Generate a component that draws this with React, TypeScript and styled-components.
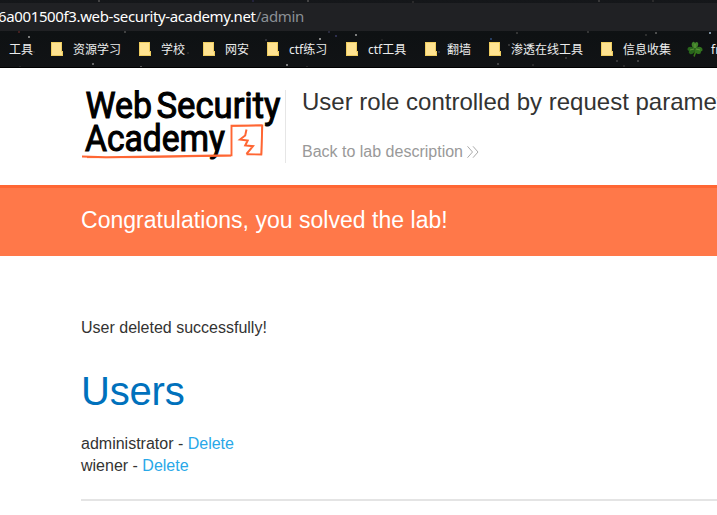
import React from "react";
import styled, { createGlobalStyle } from "styled-components";

const GlobalStyle = createGlobalStyle`
  *, *::before, *::after { box-sizing: border-box; }
  html, body { margin: 0; padding: 0; background: #fff; }
  body { overflow: hidden; font-family: "Liberation Sans", Arial, sans-serif; color: #333332; }
`;

const Page = styled.div`
  width: 717px;
  height: 515px;
  overflow: hidden;
`;

const Browser = styled.div`
  position: relative;
  height: 68px;
  padding-top: 3px;
  background: linear-gradient(#15171a 0, #0e1113 34px, #111315 66px);
  border-bottom: 1px solid #000;
`;

const Stars = styled.svg`
  position: absolute;
  inset: 0;
  width: 717px;
  height: 67px;
`;

const AddressBar = styled.div`
  height: 28px;
  background: #202124;
  color: #fff;
  font: 15px/27px "Noto Sans", sans-serif;
  white-space: nowrap;
`;

const Url = styled.span`
  display: inline-block;
  margin-left: -2px;
  letter-spacing: -0.37px;
`;

const UrlPath = styled.span`
  color: #8b9095;
`;

const Bookmarks = styled.nav`
  display: flex;
  align-items: center;
  gap: 18px;
  height: 36px;
  padding-left: 9px;
  color: #eceded;
  font: 12px/16px "Noto Sans", "Noto Sans CJK SC", sans-serif;
`;

const Bookmark = styled.div`
  display: flex;
  flex: none;
  align-items: center;
  gap: 10px;
  height: 18px;
`;

const BookmarkLabel = styled.span<{ $width: number }>`
  flex: none;
  width: ${(p) => p.$width}px;
  padding-top: 2px;
  white-space: nowrap;
`;

const CloverMark = styled(Bookmark)`
  gap: 8px;
  margin-left: -2px;
`;

const Header = styled.header`
  display: flex;
  height: 117px;
  padding: 22px 0 0 81px;
`;

const LogoBox = styled.div`
  flex: none;
  width: 205px;
  height: 73px;
  border-right: 1px solid #e6e6e6;
`;

const LabInfo = styled.div`
  flex: none;
  padding-left: 16px;
  white-space: nowrap;
`;

const Title = styled.h2`
  margin: 0;
  font-size: 24px;
  line-height: 24px;
  font-weight: 400;
`;

const BackLink = styled.a`
  display: flex;
  align-items: center;
  gap: 4px;
  margin-top: 28px;
  color: #999;
  font-size: 16px;
  line-height: 20px;
`;

const Banner = styled.section`
  height: 71px;
  padding: 17px 0 0 81px;
  border-top: 3px solid #ff6633;
  background: #ff7849;
  color: #fff;
`;

const BannerText = styled.h4`
  margin: 0;
  font-size: 23px;
  line-height: 30px;
  font-weight: 400;
  letter-spacing: 0.03px;
  white-space: nowrap;
`;

const Content = styled.main`
  padding: 61px 0 0 81px;
  font-size: 16px;
  line-height: 22px;
`;

const Message = styled.p`
  margin: 0;
`;

const Heading = styled.h1`
  margin: 29px 0 19px;
  color: #0071bc;
  font-size: 40px;
  line-height: 46px;
  font-weight: 400;
  letter-spacing: -0.2px;
`;

const UserRow = styled.div`
  height: 22px;
`;

const DeleteLink = styled.a`
  color: #29a8e8;
`;

const Rule = styled.hr`
  height: 2px;
  margin: 22px 0 0;
  border: 0;
  background: #e4e4e4;
`;

const stars: [number, number, string][] = [
  [98, 0, "#555"], [18, 31, "#5b2525"], [28, 36, "#aaa"], [124, 31, "#555"],
  [92, 63, "#888"], [140, 66, "#777"], [19, 66, "#292b2d"], [187, 52, "#333"],
  [307, 0, "#555"], [252, 0, "#29294a"], [319, 38, "#bbb"], [355, 34, "#aaa"],
  [328, 31, "#33334d"], [335, 35, "#3a3a67"], [265, 39, "#3a3a44"], [286, 64, "#aaa"],
  [306, 66, "#333"], [438, 51, "#2b3756"], [381, 39, "#28282a"], [516, 32, "#444"],
  [490, 38, "#315083"], [508, 44, "#444"], [587, 31, "#444"], [655, 32, "#666"],
  [645, 34, "#3a3a3a"], [709, 32, "#a9c3da"], [598, 0, "#444"], [412, 1, "#333"],
  [565, 57, "#444"], [497, 63, "#555"], [532, 64, "#333"], [616, 60, "#444"],
  [637, 60, "#555"], [623, 65, "#333"], [33, 51, "#2a2d31"], [652, 0, "#333"],
];

const bookmarks: [string, number][] = [
  ["资源学习", 48],
  ["学校", 24],
  ["网安", 24],
  ["ctf练习", 39],
  ["ctf工具", 39],
  ["翻墙", 24],
  ["渗透在线工具", 72],
  ["信息收集", 48],
];

const Folder = () => (
  <svg width="12" height="14" viewBox="0 0 12 14" shapeRendering="crispEdges">
    <path d="M0 0H11V9H12V14H0Z" fill="#efcd60" />
    <path d="M1 1H10V13H1Z" fill="#ffe391" />
    <path d="M10 10H11V13H10Z" fill="#ffe391" />
  </svg>
);

const Clover = () => (
  <svg width="16" height="16" viewBox="0 0 16 16">
    <path d="M8 8Q9 12 7 15.5" stroke="#397818" strokeWidth="1.6" fill="none" />
    <path d="M8 8C4 6 4 2 6 1Q7 0 8 2Q10 0 11 2C12 4 10 7 8 8Z" fill="#3f8129" />
    <path d="M8 8C5 5 1 5 .5 8Q0 9 2 10Q1 12 3 13C6 14 8 11 8 8Z" fill="#28651b" />
    <path d="M8 8C11 5 14 5 15.5 8Q16 10 14 10.500Q14 13 12 13C9 13 8 11 8 8Z" fill="#32731f" />
    <path d="M8 7L8 3M7 8L3 9M9 8L13 9" stroke="#70a542" strokeWidth=".7" />
  </svg>
);

const Logo = () => (
  <svg
    width="204"
    height="73"
    viewBox="81 90 204 73"
    fontFamily="Roboto, sans-serif"
    fontSize="37.500"
    fontWeight="400"
  >
    <g stroke="#000" strokeWidth="1.1">
      <text x="85.500" y="118.300" textLength="66.500" lengthAdjust="spacingAndGlyphs">Web</text>
      <text x="156.500" y="118.300" textLength="124" lengthAdjust="spacingAndGlyphs">Security</text>
      <text x="85" y="151" textLength="140" lengthAdjust="spacingAndGlyphs">Academy</text>
    </g>
    <g fill="none" stroke="#ff6633">
      <path d="M82 156.500L106 157.300L171 156.300L231.500 155.200L231.500 125.700L262.300 125.500L261.300 154.500L246.500 154.200" strokeWidth="1.900" />
      <path d="M87 157.600L135 157.600L231 156" strokeWidth="1" />
      <path d="M231 126.200L262 125.200M262 126L261.500 154.500" strokeWidth="1.300" />
      <path d="M246.500 129.500L245.200 135.500L240 139.500L247.700 140.500L245.200 145.500L253 146.200L246.500 154" strokeWidth="2" />
    </g>
  </svg>
);

const Chevrons = () => (
  <svg width="12" height="13" viewBox="0 0 12 13" fill="none" stroke="#aaa" strokeWidth="1">
    <path d="M.5 .3L5.500 6L.5 11.700M6 .3L11 6L6 11.700" />
  </svg>
);

export default function App() {
  return (
    <Page>
      <GlobalStyle />
      <Browser>
        <AddressBar>
          <Url>6a001500f3.web-security-academy.net<UrlPath>/admin</UrlPath></Url>
        </AddressBar>
        <Bookmarks>
          <BookmarkLabel $width={24}>工具</BookmarkLabel>
          {bookmarks.map(([label, width]) => (
            <Bookmark key={label}>
              <Folder />
              <BookmarkLabel $width={width}>{label}</BookmarkLabel>
            </Bookmark>
          ))}
          <CloverMark>
            <Clover />
            <BookmarkLabel $width={30}>free</BookmarkLabel>
          </CloverMark>
        </Bookmarks>
        <Stars>
          {stars.map(([x, y, color]) => (
            <rect key={`${x}-${y}`} x={x} y={y} width="2" height="2" fill={color} opacity=".7" />
          ))}
        </Stars>
      </Browser>
      <Header>
        <LogoBox><Logo /></LogoBox>
        <LabInfo>
          <Title>User role controlled by request parameter</Title>
          <BackLink>Back to lab description <Chevrons /></BackLink>
        </LabInfo>
      </Header>
      <Banner><BannerText>Congratulations, you solved the lab!</BannerText></Banner>
      <Content>
        <Message>User deleted successfully!</Message>
        <Heading>Users</Heading>
        <UserRow>administrator - <DeleteLink>Delete</DeleteLink></UserRow>
        <UserRow>wiener - <DeleteLink>Delete</DeleteLink></UserRow>
        <Rule />
      </Content>
    </Page>
  );
}
